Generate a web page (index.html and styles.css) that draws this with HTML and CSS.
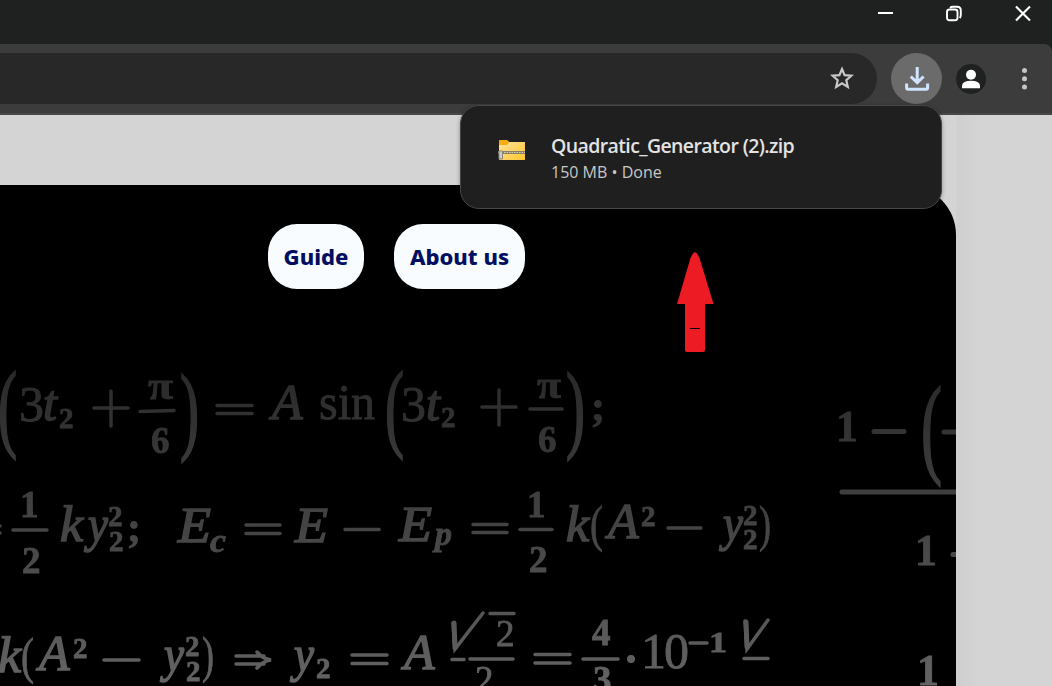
FILE: index.html
```html
<!DOCTYPE html>
<html lang="en">
<head>
<meta charset="utf-8">
<title>Quadratic Generator</title>
<link rel="stylesheet" href="styles.css">
</head>
<body>
<div class="window">
  <header class="titlebar">
    <svg class="controls" width="180" height="30" viewBox="872 0 180 30" fill="none" stroke="#fff">
      <path d="M878 13H893" stroke-width="2"/>
      <rect x="947" y="9.500" width="10.500" height="10.700" rx="2.500" stroke-width="1.9"/>
      <path d="M950 7.800Q951 6.800 953 6.800H957Q960.800 6.800 960.800 10.500V15Q960.800 17 959.700 18" stroke-width="1.9"/>
      <path d="M1016 6.500L1030 20.500M1030 6.500L1016 20.500" stroke-width="2.1"/>
    </svg>
  </header>
  <div class="toolbar">
    <div class="address">
      <svg class="star" width="24" height="24" viewBox="0 0 24 24" fill="none" stroke="#c8c8c8" stroke-width="2.200"><path d="M12 3L14.600 9.100L21.400 9.700L16.300 14.200L17.800 20.900L12 17.300L6.200 20.900L7.700 14.200L2.600 9.700L9.400 9.100Z"/></svg>
    </div>
    <div class="download">
      <svg width="26" height="26" viewBox="0 0 26 26" fill="none" stroke="#d0e3ff" stroke-width="3"><path d="M13.200 1V16.500M6.800 10.500L13.200 16.700L19.600 10.500"/><path d="M2.600 17.500V21.700Q2.600 23.200 4.100 23.200H22.100Q23.600 23.200 23.600 21.700V17.500"/></svg>
    </div>
    <div class="profile">
      <svg width="20" height="20" viewBox="0 0 20 20" fill="#fff"><circle cx="10" cy="5.700" r="5"/><path d="M1 19.200V16.500Q1.500 11.700 10 11.700Q18.500 11.700 19 16.500V19.200Z"/></svg>
    </div>
    <svg class="more" width="6" height="24" viewBox="0 0 6 24" fill="#c5c5c5"><circle cx="3.500" cy="3.500" r="2.500"/><circle cx="3.500" cy="11.700" r="2.500"/><circle cx="3.500" cy="20" r="2.500"/></svg>
  </div>
  <main class="page">
    <section class="hero">
      <nav class="nav"><a class="pill guide">Guide</a><a class="pill about">About us</a></nav>
      <svg class="formulas" width="956" height="336" viewBox="0 350 956 336">
        <defs><linearGradient id="ink" gradientUnits="userSpaceOnUse" x1="0" y1="370" x2="0" y2="686"><stop offset="0" stop-color="#292929"/><stop offset=".5" stop-color="#444"/><stop offset="1" stop-color="#646464"/></linearGradient></defs>
        <g class="glyphs">
          <text class="p" x="-2" y="439" textLength="19" lengthAdjust="spacingAndGlyphs">(</text>
          <text x="19" y="421">3</text><text class="i" x="43" y="420">t</text><text class="s" x="59" y="428">2</text>
          <text class="f" x="148" y="399" textLength="25" lengthAdjust="spacingAndGlyphs">π</text><text class="f" x="151" y="453">6</text>
          <text class="p" x="180" y="442" textLength="19" lengthAdjust="spacingAndGlyphs">)</text>
          <text class="i" x="272" y="419">A</text>
          <text x="319" y="419" textLength="56" lengthAdjust="spacingAndGlyphs">sin</text>
          <text class="p" x="385" y="439" textLength="19" lengthAdjust="spacingAndGlyphs">(</text>
          <text x="401" y="421">3</text><text class="i" x="426" y="420">t</text><text class="s" x="441" y="427">2</text>
          <text class="f" x="537" y="398" textLength="24" lengthAdjust="spacingAndGlyphs">π</text><text class="f" x="538" y="452">6</text>
          <text class="p" x="566" y="440" textLength="19" lengthAdjust="spacingAndGlyphs">)</text><text class="b" x="591" y="420">;</text>

          <text class="f" x="20" y="517">1</text><text class="f" x="22" y="573">2</text>
          <text class="i" x="60" y="541" textLength="23" lengthAdjust="spacingAndGlyphs">k</text><text class="i" x="88" y="541" textLength="20" lengthAdjust="spacingAndGlyphs">y</text><text class="s" x="108" y="526">2</text><text class="s" x="109" y="551">2</text><text class="b" x="127" y="541">;</text>
          <text class="i" x="178" y="542" textLength="33" lengthAdjust="spacingAndGlyphs">E</text><text class="s bi" x="210" y="552" textLength="16" lengthAdjust="spacingAndGlyphs">c</text>
          <text class="i" x="295" y="542" textLength="33" lengthAdjust="spacingAndGlyphs">E</text>
          <text class="i" x="399" y="541" textLength="33" lengthAdjust="spacingAndGlyphs">E</text><text class="s bi" x="435" y="545" textLength="17" lengthAdjust="spacingAndGlyphs">p</text>
          <text class="f" x="527" y="517">1</text><text class="f" x="529" y="572">2</text>
          <text class="i" x="566" y="541" textLength="23" lengthAdjust="spacingAndGlyphs">k</text><text x="590" y="541" textLength="13" lengthAdjust="spacingAndGlyphs">(</text><text class="i" x="608" y="538">A</text><text class="s" x="641" y="526">2</text>
          <text class="i" x="723" y="540" textLength="20" lengthAdjust="spacingAndGlyphs">y</text><text class="s" x="743" y="525">2</text><text class="s" x="743" y="549">2</text><text x="759" y="541" textLength="12" lengthAdjust="spacingAndGlyphs">)</text>

          <text class="i" x="-2" y="672" textLength="23" lengthAdjust="spacingAndGlyphs">k</text><text x="21" y="673" textLength="13" lengthAdjust="spacingAndGlyphs">(</text><text class="i" x="39" y="670">A</text><text class="s" x="73" y="658">2</text>
          <text class="i" x="164" y="671" textLength="20" lengthAdjust="spacingAndGlyphs">y</text><text class="s" x="185" y="656">2</text><text class="s" x="186" y="681">2</text><text x="202" y="672" textLength="12" lengthAdjust="spacingAndGlyphs">)</text>
          <text class="i" x="294" y="671" textLength="20" lengthAdjust="spacingAndGlyphs">y</text><text class="s" x="316" y="678">2</text><text class="i" x="404" y="669">A</text>
          <text class="f n" x="496" y="646">2</text><text class="f n" x="475" y="692">2</text>
          <text class="f" x="592" y="645">4</text><text class="f" x="593" y="692">3</text>
          <text x="641" y="668">1</text><text x="664" y="668">0</text><text class="s" x="709" y="652" textLength="18" lengthAdjust="spacingAndGlyphs">1</text>

          <text class="o" x="836" y="441">1</text><text class="p tall" x="921" y="463" textLength="21" lengthAdjust="spacingAndGlyphs">(</text>
          <text class="o" x="915" y="565">1</text><text class="o" x="917" y="685">1</text>
        </g>
        <g class="lines">
          <path d="M94 408H128M111 391V426M140 411.500L174 410.500M217 405.500H252M217 413.500H252M482 407H516M499 390V425M530 409H562"/>
          <path d="M-2 526H0M-2 533H0M13 530H47M246 525H280M246 533.500H280M345 529.500H379M473 524.500H507M473 532.500H507M520 529.500H552M668 528H701"/>
          <path d="M104 660H139M236 656H264M236 664H264M257 652Q263 659 271 660Q263 661 257 668M352 655H387M352 663.500H387M452 659.500H464M470 659H513M490 613.500H514M535 654.500H570M535 663H570M583 659H618M690 643H707M744 658.500H768"/>
          <path d="M453 623L455 649L483 613M745 621L747 649L768 620"/><path class="heavy" d="M454 623L455 648M746 622L747 647M874 431.500H904M944 432H956M842 492H956M953 554.500H956"/>
          <circle cx="631" cy="659" r="2"/>
        </g>
      </svg>
    </section>
  </main>
  <aside class="popup">
    <svg class="folder" width="28" height="24" viewBox="0 0 28 24"><defs><linearGradient id="fold" x2="1" y2="1"><stop stop-color="#ffe49a"/><stop offset="1" stop-color="#ffc52f"/></linearGradient></defs><path d="M1 1.500Q1 1 1.500 1H9L11.500 3V8H1Z" fill="#f5ad13"/><path d="M1 6H9L11.500 3H26.500Q27 3 27 3.500V20.500Q27 21 26.500 21H1Z" fill="url(#fold)"/><path d="M0 13.500H27" stroke="#8a8065" stroke-width="3"/><path d="M1 13.500H27" stroke="#d4cdb9" stroke-dasharray="1.500 1"/><path d="M1 12H4.500V20H1Z" fill="#ccc" stroke="#89867c"/></svg>
    <div class="file"><div class="filename">Quadratic_Generator (2).zip</div><div class="status">150 MB • Done</div></div>
  </aside>
  <svg class="arrow" width="38" height="102" viewBox="676 251 38 102"><path d="M693 253.500Q695 251 697 253.500L699.500 258L713.500 304H705V350Q705 352 703 352H687Q685 352 685 350V304H677L690.500 258Z" fill="#ed1c24"/><path d="M690 328.500H700" stroke="#000"/></svg>
</div>
</body>
</html>
```
FILE: styles.css
```css
* { box-sizing: border-box; }
body { margin: 0; overflow: hidden; font-family: "Noto Sans", sans-serif; background: #1f2120; }
svg { display: block; flex: none; }
.window { position: relative; width: 1052px; height: 686px; overflow: hidden; display: flex; flex-direction: column; }
.titlebar { height: 44px; flex: none; display: flex; justify-content: flex-end; }
.toolbar { height: 71px; flex: none; display: flex; align-items: center; background: #3c3c3c; border-bottom: 2px solid #484848; border-top-right-radius: 8px; }
.address { width: 877px; height: 51px; background: #282828; border-radius: 0 26px 26px 0; display: flex; align-items: center; justify-content: flex-end; padding: 0 23px 2px 0; }
.download { width: 51px; height: 51px; margin-left: 14px; border-radius: 50%; background: #6b6b6b; display: grid; place-items: center; }
.profile { width: 30px; height: 30px; margin-left: 14px; border-radius: 50%; background: #1f2120; display: grid; place-items: center; }
.more { margin-left: 35px; }
.page { flex: 1; padding-top: 70px; background: linear-gradient(90deg, #d4d4d4 956px, #cfcfcf 957px, #d4d4d4 980px); }
.hero { width: 956px; height: 501px; background: #000; border-top-right-radius: 50px; overflow: hidden; display: flex; flex-direction: column; }
.nav { height: 165px; padding: 39px 0 0 268px; display: flex; gap: 30px; }
.pill { height: 65px; padding-bottom: 2px; border-radius: 29px; background: #f9fcff; color: #020f60; font-size: 22px; font-weight: 800; display: flex; align-items: center; justify-content: center; white-space: nowrap; }
.guide { width: 96px; }
.about { width: 131px; }
.formulas { font-family: "Liberation Serif", serif; font-size: 50px; }
.glyphs { fill: url(#ink); stroke: url(#ink); stroke-width: .8px; filter: blur(.6px); }
.glyphs .i { font-style: italic; stroke-width: 1.5px; }
.glyphs .b { font-weight: 700; font-size: 42px; }
.glyphs .s { font-size: 29px; font-weight: 700; }
.glyphs .bi { font-style: italic; font-size: 34px; }
.glyphs .f { font-size: 37px; font-weight: 700; }
.glyphs .n { font-weight: 400; }
.glyphs .p { font-size: 98px; stroke-width: 2px; }
.glyphs .tall { font-size: 111px; }
.glyphs .o { font-size: 44px; font-weight: 700; }
.lines { fill: none; stroke: url(#ink); stroke-width: 3.5px; stroke-linecap: round; filter: blur(.6px); }
.lines .heavy { stroke-width: 5px; }
.lines circle { stroke-width: 4px; }
.popup { position: absolute; left: 460px; top: 105px; width: 482px; height: 104px; border-radius: 19px; border: 1px solid #454545; background: #1f1f1f; box-shadow: 0 1px 4px #0005; display: flex; padding: 27px 0 0 37px; }
.folder { margin-top: 6px; }
.file { margin-left: 25px; color: #e3e3e3; white-space: nowrap; }
.filename { font: 600 19.5px/25px "Open Sans", sans-serif; letter-spacing: -.61px; }
.status { font: 400 16px/29px "Open Sans", sans-serif; color: #c7c7c7; letter-spacing: 0; }
.arrow { position: absolute; left: 676px; top: 251px; }
```
